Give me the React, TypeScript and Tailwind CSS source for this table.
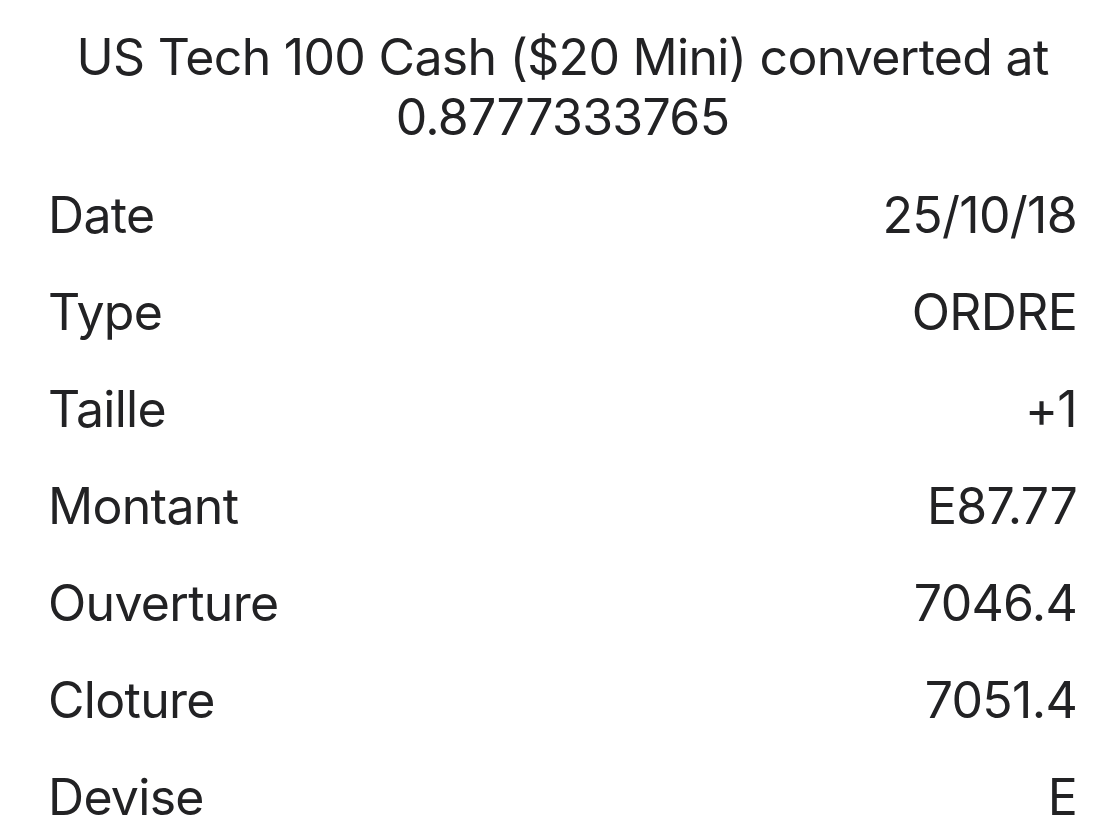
const ROWS: [string, string][] = [
  ['Date', '25/10/18'],
  ['Type', 'ORDRE'],
  ['Taille', '+1'],
  ['Montant', 'E87.77'],
  ['Ouverture', '7046.4'],
  ['Cloture', '7051.4'],
  ['Devise', 'E'],
];

export default function App() {
  return (
    <div
      className="h-[840px] w-[1102px] overflow-hidden bg-white text-[#222224]"
      style={{ fontFamily: 'Inter, "Noto Sans", sans-serif' }}
    >
      <div className="pl-[48px] pr-[25px] pt-[27px]">
        {/* Header */}
        <h1 className="text-center text-[50px] font-normal leading-[60px] tracking-[-0.7px]">
          US Tech 100 Cash ($20 Mini) converted at
          <br />
          0.8777333765
        </h1>

        <div className="mt-[19px]">
          {ROWS.map(([label, value]) => (
            <div key={label} className="flex h-[97px] items-center justify-between text-[50px] leading-[60px] tracking-[-0.7px]">
              <span>{label}</span>
              <span>{value}</span>
            </div>
          ))}
        </div>
      </div>
    </div>
  );
}
